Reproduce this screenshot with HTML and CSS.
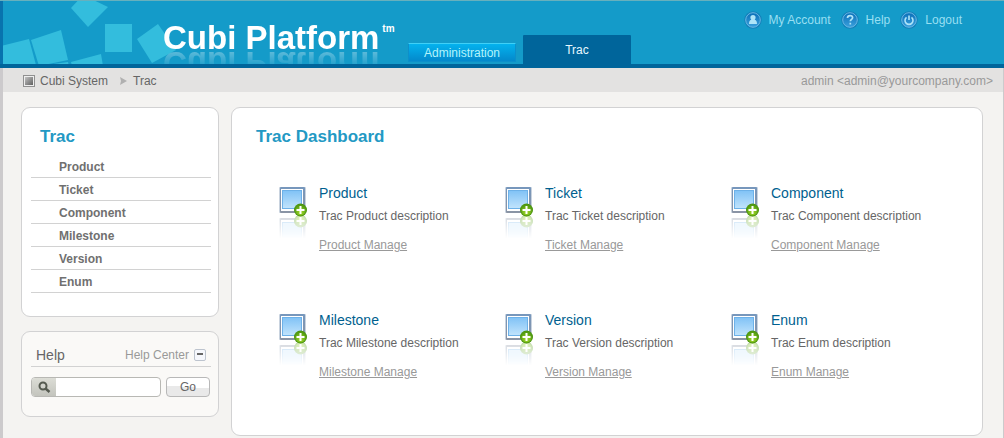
FILE: index.html
```html
<!DOCTYPE html>
<html lang="en">
<head>
<meta charset="utf-8">
<title>Cubi Platform - Trac Dashboard</title>
<link rel="stylesheet" href="styles.css">
</head>
<body>
<svg class="defs" aria-hidden="true">
  <defs>
    <linearGradient id="screen" x1="0" y1="0" x2="0" y2="1"><stop offset="0" stop-color="#82c3f6"/><stop offset="1" stop-color="#c0e3fc"/></linearGradient>
    <linearGradient id="frame" x1="0" y1="0" x2="0" y2="1"><stop offset="0" stop-color="#7697bd"/><stop offset="1" stop-color="#8b94a4"/></linearGradient>
    <radialGradient id="plus" cx=".5" cy=".7" r=".6"><stop offset="0" stop-color="#a6dc28"/><stop offset="1" stop-color="#549d12"/></radialGradient>
    <linearGradient id="badge" x1="0" y1="0" x2="0" y2="1"><stop offset="0" stop-color="#0b6fb8"/><stop offset="1" stop-color="#3aa0dc"/></linearGradient>
    <linearGradient id="knob" x1="0" y1="0" x2="1" y2="1"><stop offset="0" stop-color="#c2c2c2"/><stop offset="1" stop-color="#606060"/></linearGradient>
    <symbol id="module" viewBox="0 0 28 32">
      <rect x="0" y="1" width="27" height="26" rx="1" fill="#c9d3df"/>
      <rect x="1" y="1" width="25" height="26" rx="1" fill="url(#frame)"/>
      <rect x="2" y="3" width="22" height="22" fill="#fff"/>
      <rect x="3" y="4" width="20" height="19" fill="#6db1e8"/>
      <rect x="4" y="5" width="18" height="17" fill="url(#screen)"/>
      <circle cx="21.500" cy="24" r="6.500" fill="#4c9410"/>
      <circle cx="21.500" cy="24" r="5.500" fill="url(#plus)"/>
      <path d="M21.500 20v8M17.500 24h8" stroke="#fff" stroke-width="2"/>
    </symbol>
    <symbol id="disc" viewBox="0 0 18 18">
      <circle cx="9" cy="9" r="8.700" fill="#137fb9"/>
      <circle cx="9" cy="9" r="7.300" fill="url(#badge)" stroke="#67b7e4" stroke-width="1"/>
    </symbol>
  </defs>
</svg>
<header class="header">
  <svg class="cubes" width="175" height="63" viewBox="0 0 175 63" aria-hidden="true">
    <g fill="#33bddd">
      <path d="M80-6l25 12-20 20L68 7z"/>
      <path d="M102 23h27v28h-27z"/>
      <path d="M134 38l21-15 18 26-24 13z"/>
      <path d="M28 39l30-10 7 30-29 6z"/>
      <path d="M-2 45l28-7 7 26H-2z"/>
      <path d="M68 61l30-8 2 12H69z"/>
      <path d="M36 65l29-4 1 4z"/>
    </g>
  </svg>
  <div class="brand"><span class="name">Cubi Platform</span><span class="tm">tm</span></div>
  <nav class="tabs">
    <a class="tab" href="#">Administration</a>
    <a class="tab active" href="#">Trac</a>
  </nav>
  <nav class="account">
    <a href="#"><svg width="18" height="18" viewBox="0 0 18 18"><use href="#disc"/><path d="M9 4c-1.700 0-2.700 1-2.600 2.500 0 1 .5 1.700.9 2.200C5.500 9.200 5 10.500 5 13h8c0-2.500-.5-3.800-2.300-4.300.4-.5.900-1.200.9-2.200C11.700 5 10.700 4 9 4z" fill="#aee4f8"/></svg>My Account</a>
    <a href="#"><svg width="18" height="18" viewBox="0 0 18 18"><use href="#disc"/><path d="M6.500 7c0-1.600 1-2.400 2.600-2.400s2.500.8 2.500 2.100c0 1.500-2.300 1.800-2.300 3.600M9.300 11.800v1.800" fill="none" stroke="#aee4f8" stroke-width="1.700"/></svg>Help</a>
    <a href="#"><svg width="18" height="18" viewBox="0 0 18 18"><use href="#disc"/><path d="M6.500 6.300a4 4 0 1 0 5 0M9 4.500v4.500" fill="none" stroke="#aee4f8" stroke-width="1.600"/></svg>Logout</a>
  </nav>
</header>
<div class="page">
  <div class="crumbs">
    <nav class="trail">
      <svg width="12" height="12" viewBox="0 0 12 12"><rect x=".5" y=".5" width="11" height="11" fill="#eee" stroke="#909090"/><rect x="2" y="2" width="8" height="8" fill="url(#knob)"/></svg>
      <a href="#">Cubi System</a>
      <svg class="arrow" width="7" height="8" viewBox="0 0 7 8"><path d="M0 0l7 4-7 4 1-4z" fill="#b0b0b0"/></svg>
      <a href="#">Trac</a>
    </nav>
    <span class="user">admin &lt;admin@yourcompany.com&gt;</span>
  </div>
  <div class="columns">
    <aside class="side">
      <section class="card menu">
        <h2>Trac</h2>
        <ul>
          <li><a href="#">Product</a></li>
          <li><a href="#">Ticket</a></li>
          <li><a href="#">Component</a></li>
          <li><a href="#">Milestone</a></li>
          <li><a href="#">Version</a></li>
          <li><a href="#">Enum</a></li>
        </ul>
      </section>
      <section class="card help">
        <div class="help-head">
          <h3>Help</h3>
          <a href="#">Help Center</a>
          <button class="fold" type="button" aria-label="Collapse"></button>
        </div>
        <form class="search">
          <label class="field">
            <svg width="24" height="18" viewBox="0 0 24 18" aria-hidden="true"><circle cx="11" cy="8" r="3.500" fill="none" stroke="#555a50" stroke-width="2"/><path d="M13.500 10.500l4 3.500" stroke="#555a50" stroke-width="2.500"/></svg>
            <input type="text" aria-label="Search help">
          </label>
          <button class="go" type="button">Go</button>
        </form>
      </section>
    </aside>
    <main class="card board">
      <h1>Trac Dashboard</h1>
      <div class="modules">
        <article class="module"><svg class="icon" width="28" height="32"><use href="#module"/></svg><div><h2>Product</h2><p>Trac Product description</p><a href="#">Product Manage</a></div></article>
        <article class="module"><svg class="icon" width="28" height="32"><use href="#module"/></svg><div><h2>Ticket</h2><p>Trac Ticket description</p><a href="#">Ticket Manage</a></div></article>
        <article class="module"><svg class="icon" width="28" height="32"><use href="#module"/></svg><div><h2>Component</h2><p>Trac Component description</p><a href="#">Component Manage</a></div></article>
        <article class="module"><svg class="icon" width="28" height="32"><use href="#module"/></svg><div><h2>Milestone</h2><p>Trac Milestone description</p><a href="#">Milestone Manage</a></div></article>
        <article class="module"><svg class="icon" width="28" height="32"><use href="#module"/></svg><div><h2>Version</h2><p>Trac Version description</p><a href="#">Version Manage</a></div></article>
        <article class="module"><svg class="icon" width="28" height="32"><use href="#module"/></svg><div><h2>Enum</h2><p>Trac Enum description</p><a href="#">Enum Manage</a></div></article>
      </div>
    </main>
  </div>
</div>
</body>
</html>
```
FILE: styles.css
```css
* { box-sizing: border-box; }
body {
  margin: 0;
  min-height: 100vh;
  display: flex;
  flex-direction: column;
  background: #f4f3f1;
  color: #666;
  font: 12px/16px "Liberation Sans", Arial, sans-serif;
}
h1, h2, h3, p, ul { margin: 0; padding: 0; }
ul { list-style: none; }
a { color: inherit; text-decoration: none; }
svg { flex: none; }
.defs { position: absolute; width: 0; height: 0; }

.header {
  position: relative;
  display: flex;
  align-items: flex-end;
  height: 68px;
  border-top: 1px solid #67b0bd;
  border-bottom: 4px solid #00659b;
  background: linear-gradient(to right, #0873ae 3px, #149bc9 3px);
}
.cubes { position: absolute; left: 3px; top: 0; }
.brand {
  position: relative;
  display: flex;
  align-items: flex-start;
  align-self: stretch;
  overflow: hidden;
  width: 243px;
  margin-left: 163px;
  padding-top: 18px;
  color: #fff;
  font-weight: bold;
}
.name {
  font-size: 33px;
  line-height: 38px;
  -webkit-box-reflect: below -13px linear-gradient(transparent 35%, rgba(255, 255, 255, .45));
}
.tm { margin: 4px 0 0 3px; font-size: 10px; line-height: 12px; }
.tabs { display: flex; align-items: flex-end; gap: 7px; margin-left: 2px; }
.tab {
  width: 108px;
  height: 19px;
  margin-bottom: 2px;
  border: 1px solid #0d8fca;
  border-top-color: #3fd0f7;
  background: linear-gradient(#04b2ee, #0489cb);
  color: #b5f3fa;
  line-height: 18px;
  text-align: center;
}
.tab.active {
  height: 29px;
  margin: 0;
  border: 0;
  border-radius: 1px 1px 0 0;
  background: #00659b;
  color: #e8f8ff;
  line-height: 30px;
}
.account {
  display: flex;
  align-self: flex-start;
  gap: 10px;
  margin: 9px 42px 0 auto;
  color: #98dff2;
}
.account a { display: flex; align-items: center; gap: 7px; line-height: 20px; }

.page {
  flex: 1;
  border-left: 3px solid #cccacc;
  border-right: 1px solid #cccacc;
}
.crumbs {
  display: flex;
  align-items: center;
  justify-content: space-between;
  height: 24px;
  padding: 1px 10px 0 20px;
  background: #e3e2e1;
}
.trail { display: flex; align-items: center; gap: 5px; }
.arrow { margin: 0 1px 0 7px; }
.user { color: #999; }

.columns {
  display: flex;
  align-items: flex-start;
  gap: 12px;
  padding: 15px 20px 2px 18px;
}
.side {
  display: grid;
  grid-template-columns: minmax(0, 1fr);
  gap: 14px;
  flex: none;
  width: 198px;
}
.card { border: 1px solid #d2d2d3; border-radius: 9px; background: #fff; }
.menu { padding: 19px 7px 23px 9px; }
.menu h2, .board h1 {
  color: #2399c4;
  font-size: 17px;
  line-height: 20px;
}
.menu h2 { padding-left: 9px; }
.menu ul { padding-top: 8px; }
.menu li {
  height: 23px;
  padding-left: 28px;
  border-bottom: 1px solid #d2d2d2;
  color: #707070;
  font-weight: bold;
  line-height: 24px;
}

.help { height: 86px; padding: 12px 7px 0 9px; background: #faf9f7; }
.help-head {
  display: flex;
  align-items: center;
  gap: 5px;
  height: 23px;
  padding: 0 5px;
  border-bottom: 1px solid #d2d2d2;
}
.help-head h3 { margin-right: auto; font-size: 14px; font-weight: normal; }
.help-head a { color: #999; }
.fold {
  width: 12px;
  height: 12px;
  padding: 0;
  border: 1px solid #bdc4ce;
  border-radius: 2px;
  background: linear-gradient(#666, #666) center 3px / 6px 2px no-repeat, #f5f7fc;
}
.search { display: flex; gap: 5px; padding: 10px 1px 0 0; }
.field {
  flex: 1;
  min-width: 0;
  display: flex;
  height: 20px;
  overflow: hidden;
  border: 1px solid #b8b8b4;
  border-radius: 4px;
  background: #fff;
}
.field svg { background: linear-gradient(#dcddd6, #c3c4bd); }
.field input { flex: 1; min-width: 0; border: 0; padding: 0 4px; background: none; font: inherit; }
.go {
  flex: none;
  width: 44px;
  height: 20px;
  padding: 0;
  border: 1px solid #b8b8b8;
  border-radius: 4px;
  background: linear-gradient(4deg, #e9e9e9 50%, #fff 50%);
  color: #666;
  font: inherit;
}

.board { flex: 1; padding: 19px 24px 55px; }
.modules {
  display: grid;
  grid-template-columns: repeat(3, 1fr);
  gap: 58px 0;
  padding: 37px 1px 0 23px;
}
.module { display: flex; gap: 12px; }
.module h2 { color: #005f8f; font-size: 14px; font-weight: normal; line-height: 18px; }
.module p { padding: 6px 0 13px; }
.module a { display: block; color: #999; text-decoration: underline; }
.icon {
  margin-top: 2px;
  -webkit-box-reflect: below -5px linear-gradient(transparent 20%, rgba(255, 255, 255, .4));
}
```
